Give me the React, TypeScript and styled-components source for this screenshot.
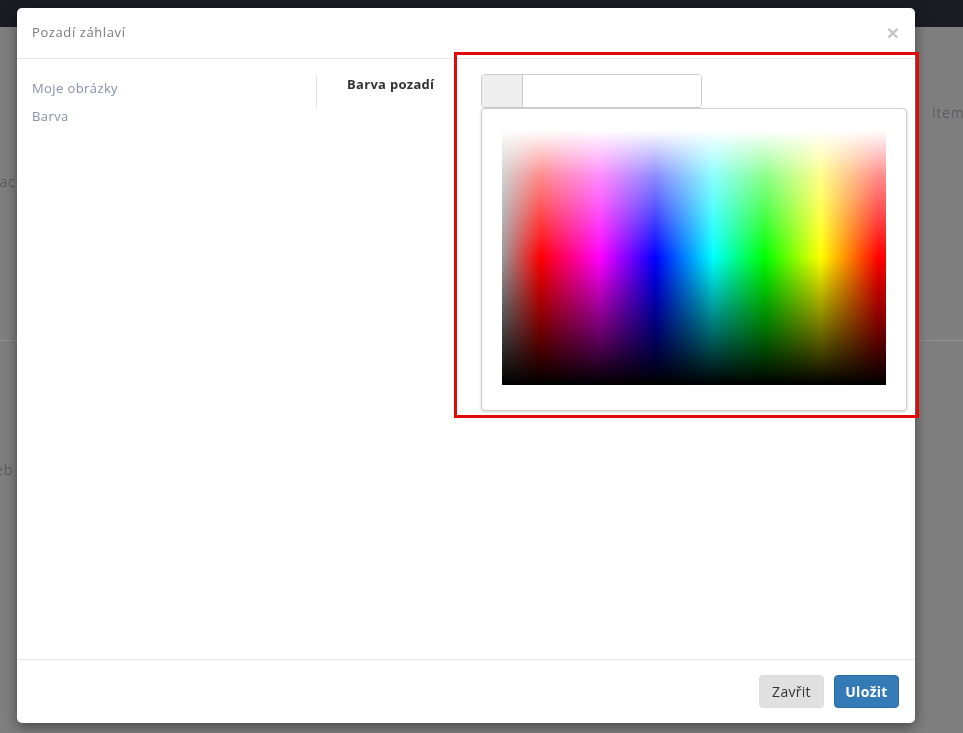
import React from "react";
import styled, { createGlobalStyle } from "styled-components";

const GlobalStyle = createGlobalStyle`
  html, body {
    margin: 0;
    padding: 0;
    width: 100%;
    height: 100%;
    overflow: hidden;
  }
  body {
    font-family: "Open Sans", "Liberation Sans", Arial, sans-serif;
    background: #7f7f7f;
  }
  * { box-sizing: border-box; }
`;

/* ---------- dimmed page behind the dialog ---------- */

const Page = styled.div`
  width: 963px;
  height: 733px;
  display: flex;
  flex-direction: column;
  background: #7f7f7f;
  color: #4c4c4c;
  font-size: 14px;
`;

const NavBar = styled.div`
  height: 27px;
  flex: none;
  background: #191c23;
`;

const PageSection = styled.section<{ $height?: number }>`
  display: grid;
  grid-template-columns: 20px 1fr 31px;
  height: ${(p) => (p.$height ? `${p.$height}px` : "auto")};
  flex: ${(p) => (p.$height ? "none" : "1")};
  border-bottom: ${(p) => (p.$height ? "1px solid #8d8d8d" : "none")};
`;

const EdgeCell = styled.div<{ $top: number; $align?: "start" | "end"; $inset?: number }>`
  display: flex;
  justify-content: ${(p) => (p.$align === "end" ? "flex-end" : "flex-start")};
  align-items: flex-start;
  padding-top: ${(p) => p.$top}px;
  padding-right: ${(p) => p.$inset ?? 0}px;
  white-space: nowrap;
  overflow: visible;
  font-weight: 300;
  letter-spacing: 1px;
`;

const Spacer = styled.div``;

/* ---------- modal ---------- */

const Dialog = styled.div`
  position: fixed;
  top: 8px;
  left: 17px;
  width: 898px;
  height: 715px;
  background: #fff;
  border-radius: 5px;
  box-shadow: 0 4px 14px rgba(0, 0, 0, 0.45);
  display: flex;
  flex-direction: column;
`;

const Header = styled.div`
  height: 51px;
  flex: none;
  display: flex;
  align-items: center;
  justify-content: space-between;
  padding: 0 16px 2px 15px;
  border-bottom: 1px solid #e5e5e5;
`;

const Title = styled.h4`
  margin: 0;
  font-size: 13px;
  font-weight: 400;
  color: #7a7a7a;
  letter-spacing: 0.6px;
`;

const CloseButton = styled.button`
  border: 0;
  background: none;
  padding: 0;
  font-family: "Liberation Sans", Arial, sans-serif;
  font-size: 21px;
  font-weight: 700;
  line-height: 1;
  color: #c4c4c4;
  cursor: pointer;
`;

const Body = styled.div`
  flex: 1;
  display: flex;
  align-items: flex-start;
  padding: 15px;
`;

const SideNav = styled.nav`
  width: 284px;
  flex: none;
  display: flex;
  flex-direction: column;
`;

const NavItem = styled.a`
  display: block;
  padding: 4px 0;
  line-height: 20px;
  font-size: 13px;
  color: #8690a6;
  text-decoration: none;
  letter-spacing: 0.4px;
`;

const FormColumn = styled.div`
  flex: 1;
  border-left: 1px solid #e6e6e6;
  padding-left: 30px;
`;

const FormRow = styled.div`
  display: flex;
  align-items: flex-start;
`;

const Label = styled.label`
  width: 134px;
  flex: none;
  font-size: 13px;
  font-weight: 700;
  line-height: 20px;
  color: #333;
  letter-spacing: 0.3px;
`;

const PickerWrap = styled.div`
  position: relative;
`;

const InputGroup = styled.div`
  display: flex;
  width: 221px;
  height: 34px;
  border: 1px solid #cccccc;
  border-radius: 4px;
  overflow: hidden;
`;

const Addon = styled.span`
  width: 41px;
  flex: none;
  background: #eeeeee;
  border-right: 1px solid #cccccc;
`;

const TextInput = styled.input`
  flex: 1;
  min-width: 0;
  border: 0;
  outline: none;
  padding: 0 10px;
  font-size: 13px;
  font-family: inherit;
`;

const Popover = styled.div`
  position: absolute;
  top: 100%;
  left: 0;
  width: 426px;
  padding: 21px 20px 25px 20px;
  background: #fff;
  border: 1px solid #cfcfcf;
  border-radius: 4px;
  box-shadow: 0 1px 3px rgba(0, 0, 0, 0.18);
`;

const Spectrum = styled.div`
  width: 384px;
  height: 255px;
  background:
    linear-gradient(
      to bottom,
      #ffffff 0%,
      rgba(255, 255, 255, 0.55) 18%,
      rgba(255, 255, 255, 0) 50%,
      rgba(0, 0, 0, 0) 50%,
      rgba(0, 0, 0, 0.55) 78%,
      #000000 100%
    ),
    linear-gradient(
      to right,
      #9a9a9a 0%,
      #ff0000 10%,
      #ff00ff 25.5%,
      #0000ff 40%,
      #00ffff 55%,
      #00ff00 68.5%,
      #ffff00 83%,
      #ff0000 98%,
      #ff0000 100%
    );
`;

const Footer = styled.div`
  flex: none;
  display: flex;
  justify-content: flex-end;
  gap: 10px;
  padding: 15px 16px 15px 15px;
  border-top: 1px solid #e5e5e5;
`;

const Button = styled.button<{ $primary?: boolean }>`
  width: 65px;
  height: 33px;
  border-radius: 4px;
  border: 1px solid ${(p) => (p.$primary ? "#2e6da4" : "#dedede")};
  background: ${(p) => (p.$primary ? "#337ab7" : "#e0e0e0")};
  color: ${(p) => (p.$primary ? "#fff" : "#333")};
  font-family: "Open Sans", "Liberation Sans", Arial, sans-serif;
  font-size: 14px;
  font-weight: ${(p) => (p.$primary ? 700 : 400)};
  letter-spacing: 0.3px;
  cursor: pointer;
  padding: 0;
`;

/* ---------- annotation ---------- */

const Highlight = styled.div`
  position: fixed;
  top: 52px;
  left: 454px;
  width: 465px;
  height: 366px;
  border: 3px solid #e10a0a;
  pointer-events: none;
`;

export default function App() {
  return (
    <>
      <GlobalStyle />
      <Page>
        <NavBar />
        <PageSection $height={314}>
          <EdgeCell $top={145} $align="end">Lokalizací</EdgeCell>
          <Spacer />
          <EdgeCell $top={76}>Items</EdgeCell>
        </PageSection>
        <PageSection>
          <EdgeCell $top={119} $align="end" $inset={7}>Web</EdgeCell>
          <Spacer />
          <Spacer />
        </PageSection>
      </Page>

      <Dialog>
        <Header>
          <Title>Pozadí záhlaví</Title>
          <CloseButton aria-label="Close">×</CloseButton>
        </Header>
        <Body>
          <SideNav>
            <NavItem href="#">Moje obrázky</NavItem>
            <NavItem href="#">Barva</NavItem>
          </SideNav>
          <FormColumn>
            <FormRow>
              <Label>Barva pozadí</Label>
              <PickerWrap>
                <InputGroup>
                  <Addon />
                  <TextInput defaultValue="" />
                </InputGroup>
                <Popover>
                  <Spectrum />
                </Popover>
              </PickerWrap>
            </FormRow>
          </FormColumn>
        </Body>
        <Footer>
          <Button>Zavřit</Button>
          <Button $primary>Uložit</Button>
        </Footer>
      </Dialog>

      <Highlight />
    </>
  );
}
